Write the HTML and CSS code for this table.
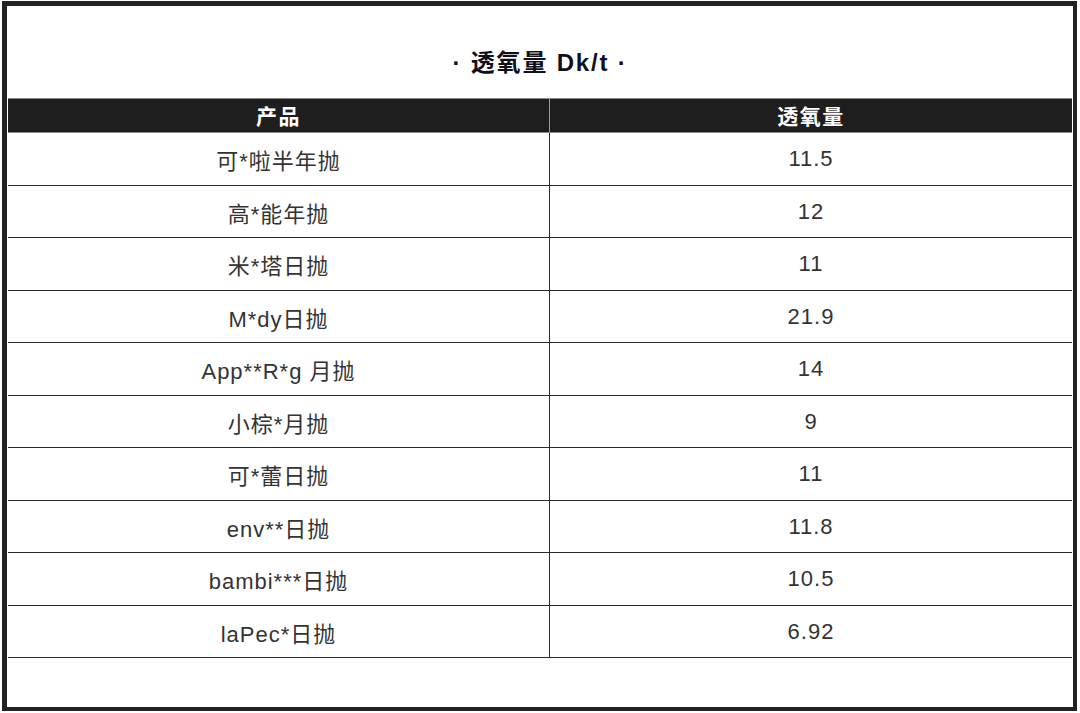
FILE: index.html
```html
<!DOCTYPE html>
<html lang="zh-CN">
<head>
<meta charset="utf-8">
<title>透氧量 Dk/t</title>
<link rel="stylesheet" href="styles.css">
</head>
<body>
<div class="frame">
  <div class="title">· 透氧量 Dk/t ·</div>
  <div class="table">
    <div class="row head">
      <div class="cell">产品</div>
      <div class="cell">透氧量</div>
    </div>
    <div class="row"><div class="cell">可*啦半年抛</div><div class="cell">11.5</div></div>
    <div class="row"><div class="cell">高*能年抛</div><div class="cell">12</div></div>
    <div class="row"><div class="cell">米*塔日抛</div><div class="cell">11</div></div>
    <div class="row"><div class="cell">M*dy日抛</div><div class="cell">21.9</div></div>
    <div class="row"><div class="cell">App**R*g 月抛</div><div class="cell">14</div></div>
    <div class="row"><div class="cell">小棕*月抛</div><div class="cell">9</div></div>
    <div class="row"><div class="cell">可*蕾日抛</div><div class="cell">11</div></div>
    <div class="row"><div class="cell">env**日抛</div><div class="cell">11.8</div></div>
    <div class="row"><div class="cell">bambi***日抛</div><div class="cell">10.5</div></div>
    <div class="row"><div class="cell">laPec*日抛</div><div class="cell">6.92</div></div>
  </div>
</div>
</body>
</html>
```

FILE: styles.css
```css
html, body {
  margin: 0;
  padding: 0;
  background: #ffffff;
}

body {
  font-family: "Liberation Sans", "Noto Sans CJK SC", sans-serif;
  color: #333333;
}

.frame {
  box-sizing: border-box;
  width: 1075px;
  height: 710px;
  margin: 1px 0 0 2px;
  border: 5px solid #222222;
  border-right-width: 4px;
  border-bottom-width: 4px;
  display: flex;
  flex-direction: column;
}

.title {
  height: 92px;
  display: flex;
  align-items: center;
  justify-content: center;
  padding-top: 16px;
  box-sizing: border-box;
  font-family: "Liberation Sans", "Noto Sans CJK SC", sans-serif;
  font-weight: 700;
  font-size: 24px;
  letter-spacing: 1.8px;
  color: #10101c;
}

.table {
  margin-left: 1px;
  width: 1064px;
  display: flex;
  flex-direction: column;
}

.row {
  display: grid;
  grid-template-columns: 542px 1fr;
  height: 52.5px;
  box-sizing: border-box;
  border-bottom: 1px solid #2a2a2a;
}

.cell {
  display: flex;
  align-items: center;
  justify-content: center;
  font-size: 22px;
  letter-spacing: 1px;
  color: #333333;
  padding-top: 1px;
}

.cell:first-child {
  border-right: 1px solid #2a2a2a;
}

.row.head {
  height: 35px;
  background: #1e1e1e;
  border-top: 1px solid #8a8a8a;
  border-bottom: 1px solid #8a8a8a;
}

.row.head .cell {
  color: #ffffff;
  font-weight: 700;
  font-size: 21px;
  letter-spacing: 1.5px;
  padding-top: 0;
  padding-bottom: 2px;
}

.row.head .cell:first-child {
  border-right: 1px solid #9a9a9a;
}
```
